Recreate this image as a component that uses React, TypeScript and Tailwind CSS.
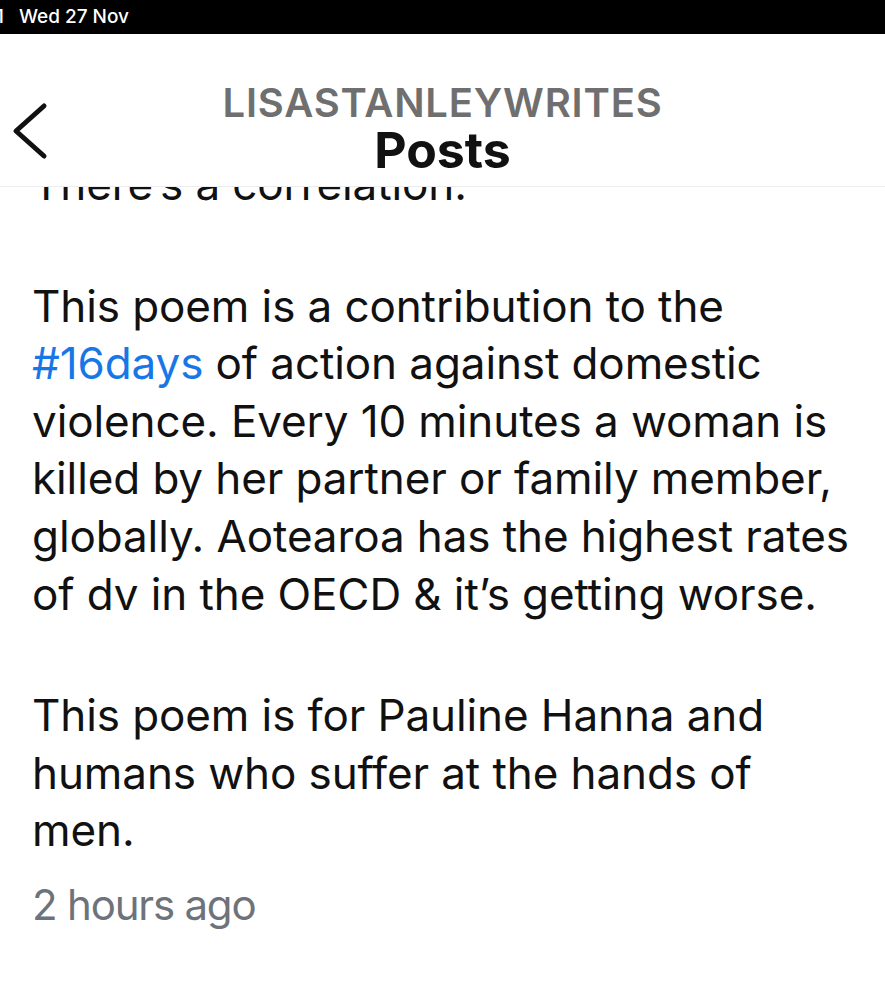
export default function App() {
  const body = 'text-[44px] leading-[57.6px] tracking-[-0.1px] text-[#111]'
  return (
    <div className="w-[885px] h-[1000px] bg-white overflow-hidden flex flex-col" style={{ fontFamily: 'Inter, "Noto Sans", sans-serif' }}>
      <div className="h-[34px] bg-black flex items-center text-white text-[19px] font-medium shrink-0">
        <span className="ml-[-4px]">1</span>
        <span className="ml-[15px]">Wed 27 Nov</span>
      </div>

      <div className="h-[153px] shrink-0 flex items-center relative border-b border-[#ececec]">
        <svg className="absolute left-[9px] top-[68px]" width="40" height="58" viewBox="0 0 40 58" fill="none">
          <path d="M35 4 L7 29 L35 54" stroke="#111" strokeWidth="5" strokeLinecap="round" strokeLinejoin="round" />
        </svg>
        <div className="w-full flex flex-col items-center pt-[36px]">
          <div className="text-[40px] leading-[44px] font-semibold text-[#6f6f6f] tracking-[0.8px]">LISASTANLEYWRITES</div>
          <div className="text-[50px] leading-[50px] font-bold text-[#111] tracking-[0px]">Posts</div>
        </div>
      </div>

      <div className="flex-1 overflow-hidden px-[32px]">
        <p className={`${body} mt-[-31px]`}>There’s a correlation.</p>
        <p className={`${body} mt-[64px]`}>
          This poem is a contribution to the<br />
          <span className="text-[#1877e6]">#16days</span> of action against domestic<br />
          violence. Every 10 minutes a woman is<br />
          killed by her partner or family member,<br />
          globally. Aotearoa has the highest rates<br />
          of dv in the OECD &amp; it’s getting worse.
        </p>
        <p className={`${body} mt-[64px]`}>
          This poem is for Pauline Hanna and<br />
          humans who suffer at the hands of<br />
          men.
        </p>
        <p className="text-[42px] leading-[57.6px] tracking-[-1.2px] text-[#6e737b] mt-[16px]">2 hours ago</p>
      </div>
    </div>
  )
}
